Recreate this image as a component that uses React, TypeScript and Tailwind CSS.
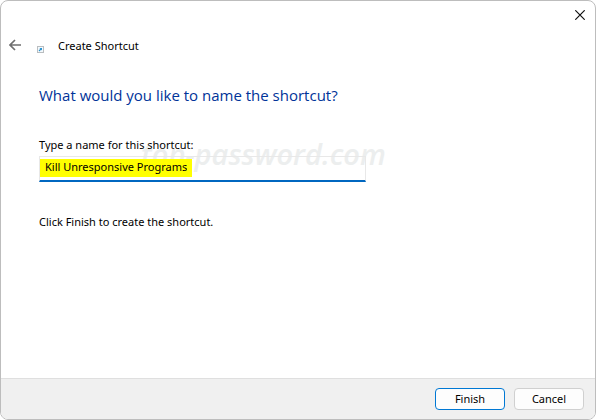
import { useState } from 'react'

function BackIcon() {
  return (
    <svg width="13" height="12" viewBox="0 0 13 12" fill="none" stroke="#6f6f6f" strokeWidth="1.7">
      <path d="M12 6H1M6 1 1 6l5 5" />
    </svg>
  )
}

function ShortcutIcon() {
  return (
    <svg width="7" height="7" viewBox="0 0 7 7" fill="none">
      <rect x="0.5" y="0.5" width="6" height="6" fill="#f4f9fc" stroke="#b9bdc0" />
      <path d="M2 5 4.6 2.4" stroke="#2a93d0" strokeWidth="1.2" />
      <path d="M2.4 2H5v2.6z" fill="#2a93d0" />
    </svg>
  )
}

function CloseIcon() {
  return (
    <svg width="10" height="10" viewBox="0 0 10 10" fill="none" stroke="#111" strokeWidth="1.2">
      <path d="M0.3 0.3l9.4 9.4M9.7 0.3 0.3 9.7" />
    </svg>
  )
}

export default function App() {
  const [name, setName] = useState('Kill Unresponsive Programs')

  return (
    <div className="min-h-screen flex flex-col overflow-hidden rounded-lg border border-[#bdbdbd] bg-white font-['Noto_Sans','Open_Sans',sans-serif] text-[11px] text-black">
      {/* Title bar */}
      <div className="flex h-7 items-center justify-end pr-[10px]">
        <button type="button" aria-label="Close">
          <CloseIcon />
        </button>
      </div>

      {/* Wizard header */}
      <header className="flex h-8 items-center pl-2">
        <button type="button" aria-label="Back">
          <BackIcon />
        </button>
        <span className="ml-[15px] pt-2">
          <ShortcutIcon />
        </span>
        <span className="ml-[14px] pt-px leading-4">Create Shortcut</span>
      </header>

      <main className="flex-1 px-[38px] pt-[22px]">
        <h1 className="font-['Open_Sans',sans-serif] text-[15px] leading-6 text-[#003399]">
          What would you like to name the shortcut?
        </h1>

        <div className="relative mt-[29px]">
          <span className="pointer-events-none absolute left-[102px] top-0 whitespace-nowrap font-['Open_Sans',sans-serif] text-[29px] font-semibold italic leading-9 text-[#eceeee]">
            top-password.com
          </span>
          <label htmlFor="name" className="relative block pt-px leading-4">
            Type a name for this shortcut:
          </label>
          <div className="relative mt-[3px] flex h-[26px] w-[327px] max-w-full items-start border border-b-2 border-[#e8e8e8] border-b-[#0067c0] pt-[2px]">
            <input
              id="name"
              type="text"
              value={name}
              onChange={(e) => setName(e.target.value)}
              className="field-sizing-content h-[18px] max-w-full bg-[#ffff00] px-[5px] pb-[3px] leading-4 outline-none"
            />
          </div>
        </div>

        <p className="mt-8 leading-4">Click Finish to create the shortcut.</p>
      </main>

      {/* Actions */}
      <footer className="flex justify-end gap-[9px] border-t border-[#dfdfdf] bg-[#f0f0f0] px-[11px] py-[9px]">
        <button type="button" className="h-[22px] w-[70px] rounded-[4px] border border-[#0078d4] bg-[#fdfdfd]">
          Finish
        </button>
        <button type="button" className="h-[22px] w-[70px] rounded-[4px] border border-[#d0d0d0] bg-[#fdfdfd]">
          Cancel
        </button>
      </footer>
    </div>
  )
}
